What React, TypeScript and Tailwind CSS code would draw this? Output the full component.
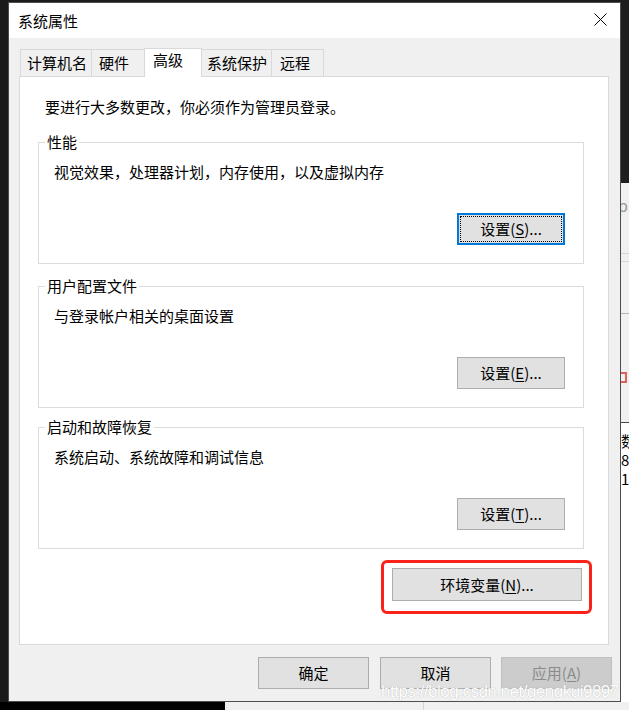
import type { ReactNode } from "react";

const font = "font-['Noto_Sans_CJK_SC','Noto_Sans',sans-serif]";

function Btn({ children, wide, primary, disabled }: { children: ReactNode; wide?: boolean; primary?: boolean; disabled?: boolean }) {
    if (primary) {
        return (
            <button type="button" className="flex h-[32px] w-[108px] border-2 border-[#0078d7] bg-[#e1e1e1] p-[1px] text-[15px] leading-[20px] text-black">
                <span className="flex flex-1 items-center justify-center border border-dotted border-black">{children}</span>
            </button>
        );
    }
    return (
        <button
            type="button"
            className={
                (wide ? "h-[33px] w-[190px] " : "h-[32px] w-[108px] ") +
                (disabled
                    ? "border-[#bfbfbf] bg-[#cccccc] text-[#8b8b8b] "
                    : "border-[#adadad] bg-[#e1e1e1] text-black ") +
                "flex items-center justify-center border text-[15px] leading-[20px]"
            }
        >
            {children}
        </button>
    );
}

function Key({ k }: { k: string }) {
    return <u className="underline-offset-[2px]">{k}</u>;
}

function Group({ title, text, btn, className }: { title: string; text: string; btn: ReactNode; className: string }) {
    return (
        <fieldset className={"border border-[#dcdcdc] pb-[18px] " + className}>
            <legend className="ml-[6px] px-[2px] text-[15px] leading-[18px]">{title}</legend>
            <p className="mt-[11px] pl-[15px] text-[15px] leading-[20px]">{text}</p>
            <div className="mt-[31px] flex justify-end pr-[18px]">{btn}</div>
        </fieldset>
    );
}

const tabs = [
    { label: "计算机名", cls: "w-[72px] pl-[6px]" },
    { label: "硬件", cls: "w-[54px] pl-[7px] -ml-[1px]" },
    { label: "高级", cls: "w-[58px] pl-[8px] -ml-[1px]", active: true },
    { label: "系统保护", cls: "w-[71px] pl-[5px] -ml-[1px]" },
    { label: "远程", cls: "w-[53px] pl-[8px] -ml-[1px]" },
];

export default function App() {
    return (
        <div className={"relative flex h-[710px] w-[629px] flex-col overflow-hidden bg-[#1b1b1b] text-black " + font}>
            <div className="flex h-[702px]">
                <div className="w-[8px] bg-[#1a1a1a]" />

                {/* dialog */}
                <div className="mt-[2px] flex h-[700px] w-[613px] flex-col border border-[#4d4d4d] bg-[#f0f0f0]">
                    <div className="flex h-[35px] items-center justify-between bg-white pl-[9px] pr-[13px]">
                        <span className="text-[15px] leading-[20px]">系统属性</span>
                        <svg width="13" height="13" viewBox="0 0 13 13" className="-mt-[2px]">
                            <path d="M0.5 0.5 L12.5 12.5 M12.5 0.5 L0.5 12.5" stroke="#000" strokeWidth="1" fill="none" />
                        </svg>
                    </div>

                    <div className="flex flex-1 flex-col pl-[10px] pr-[11px] pt-[10px]">
                        {/* tabs */}
                        <div className="ml-[1px] flex h-[28px] items-end">
                            {tabs.map((t) =>
                                t.active ? (
                                    <div key={t.label} className={"relative z-10 -mb-[1px] h-[29px] border border-b-0 border-[#d9d9d9] bg-white pt-[1px] text-[15px] leading-[20px] " + t.cls}>
                                        {t.label}
                                    </div>
                                ) : (
                                    <div key={t.label} className={"h-[27px] border border-b-0 border-[#d9d9d9] bg-[#f0f0f0] pt-[3px] text-[15px] leading-[20px] " + t.cls}>
                                        {t.label}
                                    </div>
                                )
                            )}
                        </div>

                        {/* panel */}
                        <div className="flex h-[569px] w-[590px] flex-col border border-[#d9d9d9] bg-white pb-[43px] pl-[18px] pr-[24px] pt-[20px]">
                            <p className="pl-[7px] text-[15px] leading-[20px]">要进行大多数更改，你必须作为管理员登录。</p>
                            <Group
                                className="mt-[16px]"
                                title="性能"
                                text="视觉效果，处理器计划，内存使用，以及虚拟内存"
                                btn={<Btn primary>设置(<Key k="S" />)...</Btn>}
                            />
                            <Group
                                className="mt-[13px]"
                                title="用户配置文件"
                                text="与登录帐户相关的桌面设置"
                                btn={<Btn>设置(<Key k="E" />)...</Btn>}
                            />
                            <Group
                                className="mt-[10px]"
                                title="启动和故障恢复"
                                text="系统启动、系统故障和调试信息"
                                btn={<Btn>设置(<Key k="T" />)...</Btn>}
                            />
                            <div className="mr-[2px] mt-[19px] flex justify-end">
                                <div className="relative">
                                    <Btn wide>环境变量(<Key k="N" />)...</Btn>
                                    <div className="absolute -left-[11px] -top-[8px] h-[54px] w-[211px] rounded-[6px] border-[3px] border-[#fa2319]" />
                                </div>
                            </div>
                        </div>

                        {/* footer buttons */}
                        <div className="-mr-[3px] mt-[12px] flex justify-end">
                            <div className="flex gap-[11px]">
                                <div className="[&>button]:w-[111px]"><Btn>确定</Btn></div>
                                <div className="flex gap-[10px] [&>button]:w-[111px]">
                                    <Btn>取消</Btn>
                                    <Btn disabled>应用(<Key k="A" />)</Btn>
                                </div>
                            </div>
                        </div>
                    </div>
                </div>

                {/* background window on the right */}
                <div className="flex w-[8px] flex-col overflow-hidden">
                    <div className="h-[183px] shrink-0 bg-[#1e1e1e]" />
                    <div className="flex h-[239px] shrink-0 flex-col bg-[#f0f0f0]">
                        <span className="mt-[12px] -ml-[3px] text-[16px] leading-[20px] text-[#9a9a9a]">p</span>
                        <div className="mt-[38px] h-[1px] bg-[#d6d6d6]" />
                        <div className="mt-[7px] h-[1px] bg-[#d6d6d6]" />
                        <div className="mt-[51px] h-[1px] bg-[#b5b5b5]" />
                        <div className="mt-[58px] h-[11px] w-[6px] border-[2px] border-l-0 border-[#e0605a]" />
                    </div>
                    <div className="flex flex-1 flex-col border-t border-[#4a4a4a] bg-white text-[15px] leading-[19px]">
                        <span className="mt-[8px]">数</span>
                        <span>8</span>
                        <span>1</span>
                    </div>
                </div>
            </div>

            {/* bottom strip */}
            <div className="flex h-[8px]">
                <div className="w-[225px] bg-black" />
                <div className="w-[198px] bg-[#f0f0f0]" />
                <div className="flex-1 border-l border-[#d4d4d4] bg-[#f0f0f0]" />
            </div>

            {/* watermark */}
            <div className="absolute left-[381px] top-[683px] font-['Liberation_Sans',Arial,sans-serif] text-[17px] leading-[17px] tracking-[-0.5px] text-white [text-shadow:0_0_1px_rgba(110,110,110,0.55)]">
                https://blog.csdn.net/gengkui9897
            </div>
        </div>
    );
}
